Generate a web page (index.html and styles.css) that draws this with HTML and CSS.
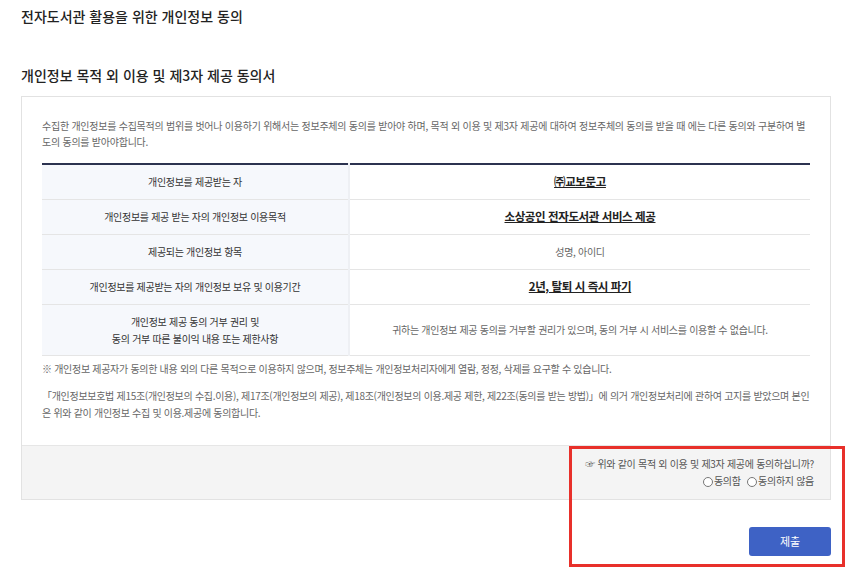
FILE: index.html
```html
<!DOCTYPE html>
<html lang="ko">
<head>
  <meta charset="UTF-8">
  <meta name="viewport" content="width=device-width, initial-scale=1.0">
  <title>전자도서관 활용을 위한 개인정보 동의</title>
  <link rel="stylesheet" href="styles.css">
</head>
<body>
  <div class="page">
    <h1 class="page-title">전자도서관 활용을 위한 개인정보 동의</h1>

    <h2 class="section-title">개인정보 목적 외 이용 및 제3자 제공 동의서</h2>

    <div class="agree-box">
      <div class="agree-body">
        <p class="intro">수집한 개인정보를 수집목적의 범위를 벗어나 이용하기 위해서는 정보주체의 동의를 받아야 하며, 목적 외 이용 및 제3자 제공에 대하여 정보주체의 동의를 받을 때 에는 다른 동의와 구분하여 별도의 동의를 받아야합니다.</p>

        <table class="info-table">
          <tr>
            <th>개인정보를 제공받는 자</th>
            <td><strong>㈜교보문고</strong></td>
          </tr>
          <tr>
            <th>개인정보를 제공 받는 자의 개인정보 이용목적</th>
            <td><strong>소상공인 전자도서관 서비스 제공</strong></td>
          </tr>
          <tr>
            <th>제공되는 개인정보 항목</th>
            <td>성명, 아이디</td>
          </tr>
          <tr>
            <th>개인정보를 제공받는 자의 개인정보 보유 및 이용기간</th>
            <td><strong>2년, 탈퇴 시 즉시 파기</strong></td>
          </tr>
          <tr class="tall">
            <th>개인정보 제공 동의 거부 권리 및<br>동의 거부 따른 불이익 내용 또는 제한사항</th>
            <td>귀하는 개인정보 제공 동의를 거부할 권리가 있으며, 동의 거부 시 서비스를 이용할 수 없습니다.</td>
          </tr>
        </table>

        <p class="note">※ 개인정보 제공자가 동의한 내용 외의 다른 목적으로 이용하지 않으며, 정보주체는 개인정보처리자에게 열람, 정정, 삭제를 요구할 수 있습니다.</p>

        <p class="law">「개인정보보호법 제15조(개인정보의 수집.이용), 제17조(개인정보의 제공), 제18조(개인정보의 이용.제공 제한, 제22조(동의를 받는 방법)」에 의거 개인정보처리에 관하여 고지를 받았으며 본인은 위와 같이 개인정보 수집 및 이용.제공에 동의합니다.</p>
      </div>

      <div class="agree-foot">
        <p class="question">☞ 위와 같이 목적 외 이용 및 제3자 제공에 동의하십니까?</p>
        <div class="choices">
          <label><input type="radio" name="agree" value="y">동의함</label>
          <label><input type="radio" name="agree" value="n">동의하지 않음</label>
        </div>
      </div>
    </div>

    <div class="actions">
      <button type="button" class="btn-submit">제출</button>
    </div>

    <div class="focus-mark"></div>
  </div>
</body>
</html>
```

FILE: styles.css
```css
* {
  box-sizing: border-box;
}
body {
  margin: 0;
  min-height: 100vh;
  font-family: "Noto Sans CJK KR", "Noto Sans", sans-serif;
  color: #222;
  background: #fff;
}
.page {
  position: relative;
  min-height: 100vh;
  padding: 0 23px 0 21px;
}
.page-title {
  margin: 0;
  padding-top: 6px;
  font-size: 14px;
  line-height: 20px;
  font-weight: 500;
}
.section-title {
  margin: 0;
  padding-top: 39px;
  font-size: 14px;
  line-height: 20px;
  font-weight: 500;
}
.agree-box {
  margin-top: 11px;
  border: 1px solid #e2e2e2;
}
.agree-body {
  padding: 21px 20px 24px;
}
.intro {
  margin: 0;
  font-size: 10px;
  letter-spacing: -0.25px;
  line-height: 15.5px;
  color: #666;
}
.info-table {
  width: 100%;
  margin-top: 14px;
  border-collapse: collapse;
  border-top: 2px solid #2c3350;
  font-size: 10px;
  letter-spacing: -0.3px;
}
.info-table th,
.info-table td {
  height: 35px;
  padding: 0 10px;
  text-align: center;
  border-bottom: 1px solid #e5e5e5;
  line-height: 17px;
}
.info-table th {
  width: 307px;
  background: #f6f8fc;
  border-right: 2px solid #eef0f4;
  font-weight: 400;
  color: #333;
}
.info-table td {
  color: #666;
}
.info-table tr.tall th,
.info-table tr.tall td {
  height: 51px;
}
.info-table strong {
  font-size: 11.5px;
  font-weight: 700;
  letter-spacing: -0.4px;
  color: #222;
  text-decoration: underline;
}
.note {
  margin: 4px 0 0;
  font-size: 10px;
  letter-spacing: -0.3px;
  line-height: 17px;
  color: #666;
}
.law {
  margin: 10px 0 0;
  font-size: 10px;
  letter-spacing: -0.3px;
  line-height: 17px;
  color: #666;
}
.agree-foot {
  background: #f4f4f4;
  border-top: 1px solid #e6e6e6;
  padding: 9px 16px 10px;
  text-align: right;
  font-size: 10px;
  letter-spacing: -0.3px;
  color: #555;
}
.question {
  margin: 0;
  line-height: 17px;
}
.choices {
  line-height: 17px;
}
.choices label {
  margin-left: 4px;
}
.choices input {
  appearance: none;
  width: 10px;
  height: 10px;
  margin: 0 1px 0 0;
  border: 1px solid #777;
  border-radius: 50%;
  background: #fff;
  vertical-align: -2px;
}
.actions {
  display: flex;
  justify-content: flex-end;
  padding-top: 27px;
}
.btn-submit {
  width: 82px;
  height: 29px;
  border: 0;
  border-radius: 3px;
  background: #3e62c5;
  color: #fff;
  font-family: inherit;
  font-size: 11px;
  cursor: pointer;
}
.focus-mark {
  position: absolute;
  left: 569px;
  top: 446px;
  width: 276px;
  height: 121px;
  border: 3px solid #e8302a;
  pointer-events: none;
}
```
